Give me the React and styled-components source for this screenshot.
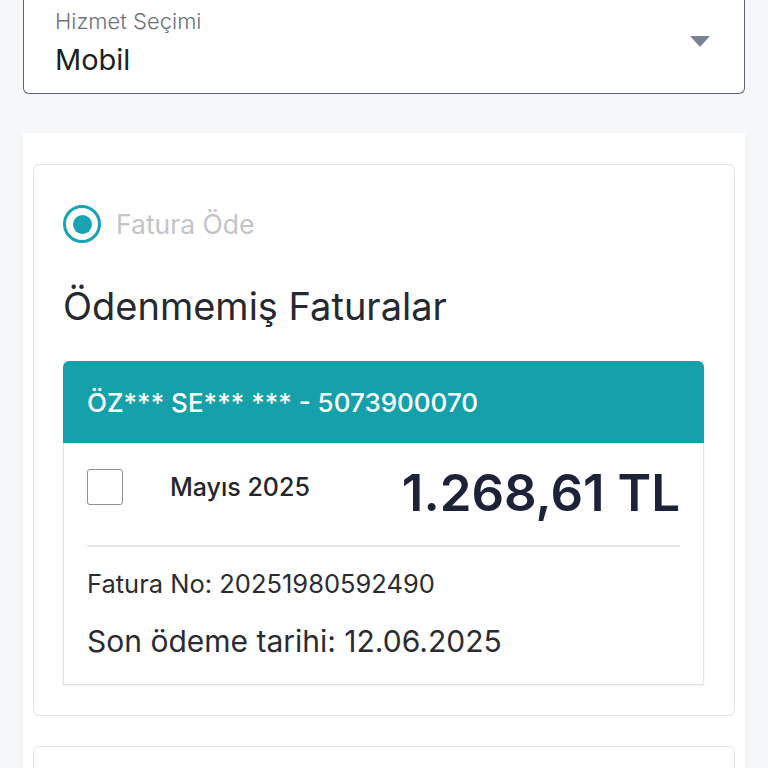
import React from "react";
import styled, { createGlobalStyle } from "styled-components";

const Global = createGlobalStyle`
  html, body { margin: 0; padding: 0; background: #f6f7f9; }
  body { font-family: Inter, "Noto Sans", sans-serif; color: #23262e; overflow: hidden; }
  * { box-sizing: border-box; }
`;

const Page = styled.div`
  width: 768px;
  height: 768px;
  padding: 0 23px;
  display: flex;
  flex-direction: column;
  gap: 39px;
  overflow: hidden;
`;

const Select = styled.div`
  margin-top: -10px;
  height: 104px;
  flex: none;
  background: #fff;
  border: 1.5px solid #5e6370;
  border-top: none;
  border-radius: 0 0 6px 6px;
  padding: 19px 34px 0 31px;
  display: flex;
  align-items: flex-start;
  justify-content: space-between;
`;

const SelectTexts = styled.div`
  display: flex;
  flex-direction: column;
  gap: 10px;
`;

const SelectLabel = styled.span`
  font-size: 22px;
  line-height: 24px;
  color: #6e727a;
  font-weight: 300;
`;

const SelectValue = styled.span`
  font-size: 29px;
  line-height: 34px;
  color: #1d1f24;
  font-weight: 400;
`;

const Caret = styled.svg`
  margin-top: 27px;
  flex: none;
`;

const Panel = styled.div`
  background: #fff;
  padding: 31px 10px 0;
  display: flex;
  flex-direction: column;
  gap: 30px;
  flex: 1;
`;

const Card = styled.div`
  border: 1.5px solid #e4e5e8;
  border-radius: 6px;
  padding: 40px 30px 30px 29px;
  display: flex;
  flex-direction: column;
  min-height: ${(p) => p.$minH || 0}px;
  flex: none;
`;

const RadioRow = styled.label`
  display: flex;
  align-items: center;
  gap: 15px;
`;

const Radio = styled.span`
  width: 38px;
  height: 38px;
  border-radius: 50%;
  border: 3.5px solid #19a3b3;
  display: flex;
  align-items: center;
  justify-content: center;
  &::after {
    content: "";
    width: 19px;
    height: 19px;
    border-radius: 50%;
    background: #19a3b3;
  }
`;

const RadioText = styled.span`
  font-size: 26.5px;
  color: #c3c4c7;
  font-weight: 400;
`;

const Heading = styled.h2`
  margin: 40px 0 32px;
  font-size: 38px;
  font-weight: 400;
  color: #262930;
  line-height: 46px;
`;

const Bill = styled.div`
  display: flex;
  flex-direction: column;
  border-radius: 6px 6px 0 0;
  box-shadow: 0 1px 2px rgba(0,0,0,0.08);
`;

const BillHeader = styled.div`
  height: 82px;
  background: #16a0aa;
  border-radius: 6px 6px 0 0;
  color: #fff;
  font-size: 26px;
  font-weight: 500;
  display: flex;
  align-items: center;
  padding-left: 24px;
`;

const BillBody = styled.div`
  border: 1.5px solid #e2e3e6;
  border-top: none;
  padding: 26px 23px 24.5px 23px;
  display: flex;
  flex-direction: column;
`;

const TopRow = styled.div`
  display: flex;
  align-items: flex-start;
  padding-bottom: 34px;
  border-bottom: 2px solid #e6e7ea;
`;

const Check = styled.span`
  width: 36px;
  height: 36px;
  border: 1.5px solid #8d9096;
  border-radius: 3px;
  flex: none;
`;

const Period = styled.span`
  margin-left: 47px;
  font-size: 25px;
  line-height: 36px;
  font-weight: 500;
  color: #24262c;
`;

const Amount = styled.span`
  margin-left: auto;
  margin-top: 6px;
  font-size: 51px;
  line-height: 36px;
  font-weight: 600;
  color: #1e2236;
`;

const Meta = styled.div`
  font-size: ${(p) => p.$size}px;
  line-height: ${(p) => p.$lh}px;
  color: #2a2c31;
  margin-top: ${(p) => p.$mt}px;
`;

export default function App() {
  return (
    <>
      <Global />
      <Page>
        <Select>
          <SelectTexts>
            <SelectLabel>Hizmet Seçimi</SelectLabel>
            <SelectValue>Mobil</SelectValue>
          </SelectTexts>
          <Caret width="20" height="11" viewBox="0 0 20 11">
            <path d="M0 0 H20 L10 11 Z" fill="#7a8296" />
          </Caret>
        </Select>
        <Panel>
          <Card>
            <RadioRow>
              <Radio />
              <RadioText>Fatura Öde</RadioText>
            </RadioRow>
            <Heading>Ödenmemiş Faturalar</Heading>
            <Bill>
              <BillHeader>ÖZ*** SE*** *** - 5073900070</BillHeader>
              <BillBody>
                <TopRow>
                  <Check />
                  <Period>Mayıs 2025</Period>
                  <Amount>1.268,61 TL</Amount>
                </TopRow>
                <Meta $size={25.5} $lh={30} $mt={22}>Fatura No: 20251980592490</Meta>
                <Meta $size={30} $lh={36} $mt={24}>Son ödeme tarihi: 12.06.2025</Meta>
              </BillBody>
            </Bill>
          </Card>
          <Card $minH={100} />
        </Panel>
      </Page>
    </>
  );
}
